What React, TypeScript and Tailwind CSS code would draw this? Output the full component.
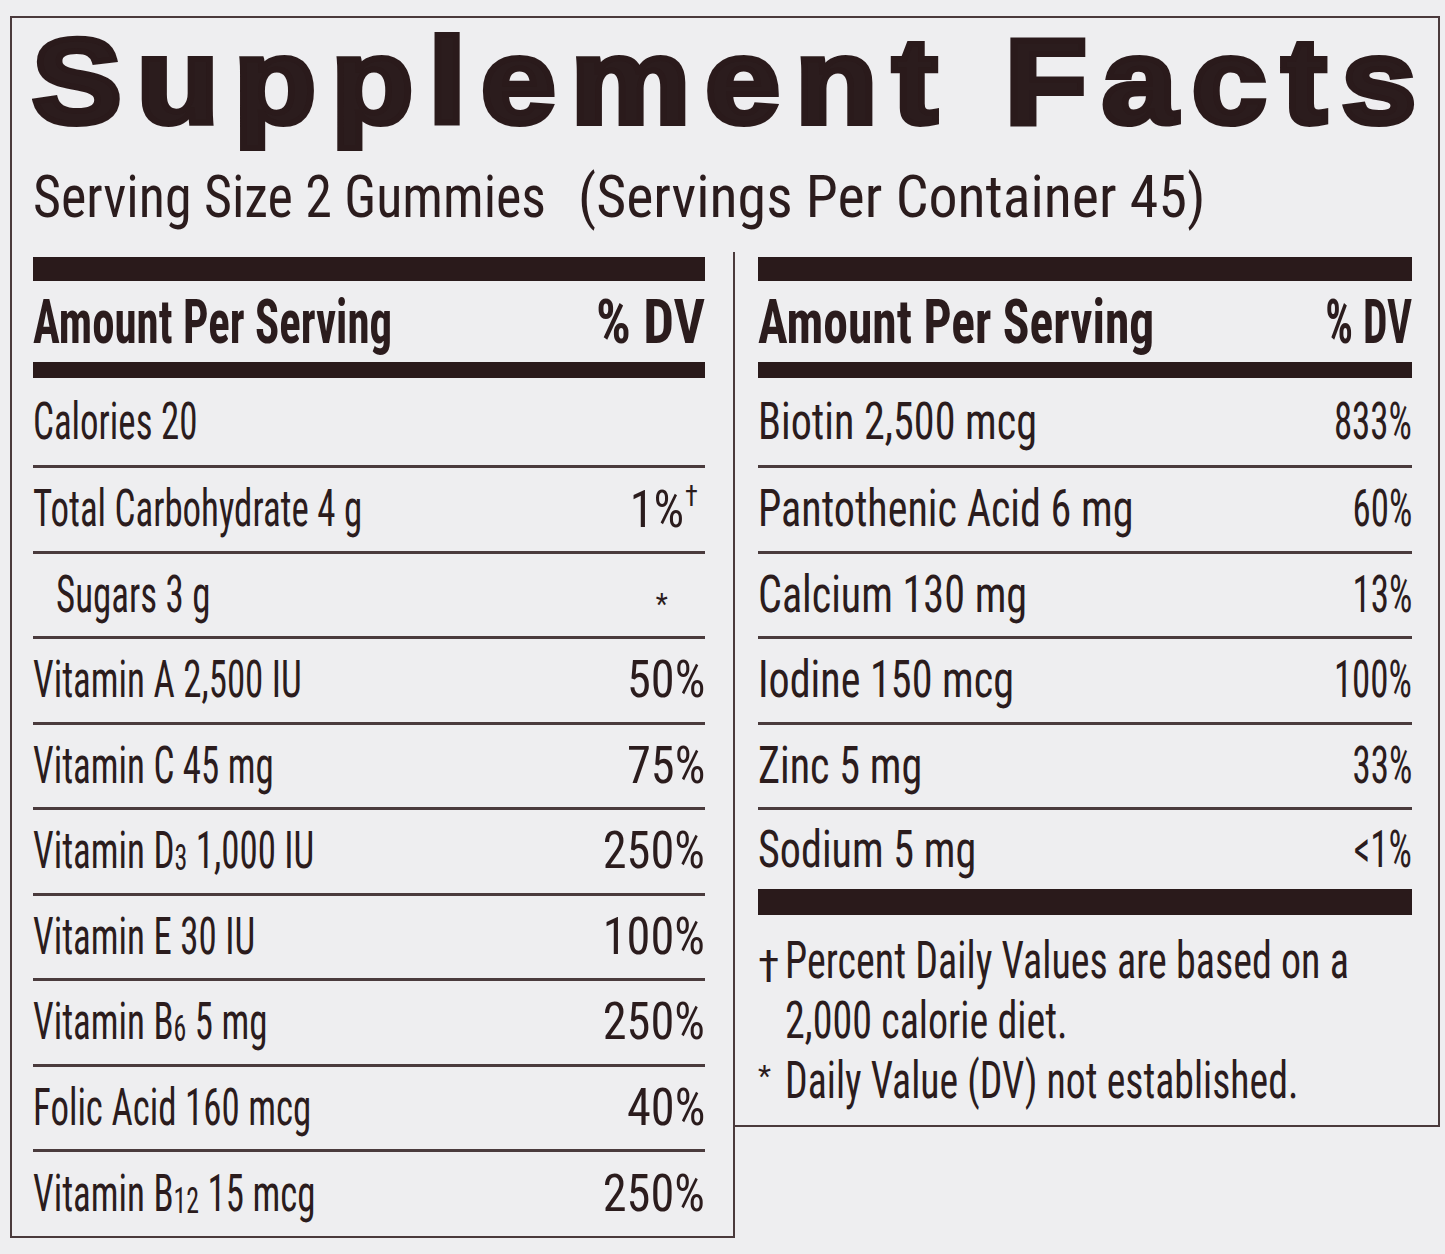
import React from 'react';

// Supplement Facts panel

type Row = {
  label: React.ReactNode;
  value?: React.ReactNode;
  indent?: boolean;
};

type Scales = {
  head: string;
  dv: string;
  label: string;
  value: string;
};

const Sub = ({ children }: { children: React.ReactNode }) => (
  <span className="text-[0.7em] align-[-0.06em]">{children}</span>
);

const LEFT_ROWS: Row[] = [
  { label: 'Calories 20' },
  {
    label: 'Total Carbohydrate 4 g',
    value: (
      <span className="inline-block mr-[8px]">
        1%<span className="text-[0.55em] align-[0.75em] ml-[1px]">†</span>
      </span>
    ),
  },
  {
    label: 'Sugars 3 g',
    indent: true,
    value: <span className="inline-block text-[30px] mr-[40px] translate-y-[2px]">*</span>,
  },
  { label: 'Vitamin A 2,500 IU', value: '50%' },
  { label: 'Vitamin C 45 mg', value: '75%' },
  { label: <>Vitamin D<Sub>3</Sub> 1,000 IU</>, value: '250%' },
  { label: 'Vitamin E 30 IU', value: '100%' },
  { label: <>Vitamin B<Sub>6</Sub> 5 mg</>, value: '250%' },
  { label: 'Folic Acid 160 mcg', value: '40%' },
  { label: <>Vitamin B<Sub>12</Sub> 15 mcg</>, value: '250%' },
];

const RIGHT_ROWS: Row[] = [
  { label: 'Biotin 2,500 mcg', value: '833%' },
  { label: 'Pantothenic Acid 6 mg', value: '60%' },
  { label: 'Calcium 130 mg', value: '13%' },
  { label: 'Iodine 150 mcg', value: '100%' },
  { label: 'Zinc 5 mg', value: '33%' },
  { label: 'Sodium 5 mg', value: '<1%' },
];

const LEFT_SCALES: Scales = {
  head: 'scale-x-[0.725]',
  dv: 'scale-x-[0.88]',
  label: 'scale-x-[0.71]',
  value: 'scale-x-[0.93]',
};

const RIGHT_SCALES: Scales = {
  head: 'scale-x-[0.8]',
  dv: 'scale-x-[0.7]',
  label: 'scale-x-[0.81]',
  value: 'scale-x-[0.71]',
};

function HeaderRow({ s }: { s: Scales }) {
  return (
    <>
      <div className="mt-[5px] h-[24px] bg-[#2a1a1b]" />
      <div className="h-[81px] flex items-center justify-between font-bold text-[62px] leading-none">
        <span className={`inline-block origin-left whitespace-nowrap ${s.head}`}>Amount Per Serving</span>
        <span className={`inline-block origin-right whitespace-nowrap ${s.dv}`}>% DV</span>
      </div>
      <div className="h-[16px] bg-[#2a1a1b]" />
    </>
  );
}

function NutrientRow({ row, first, height, s }: { row: Row; first: boolean; height: string; s: Scales }) {
  return (
    <div
      className={`flex items-center justify-between text-[52px] leading-none ${height} ${
        first ? '' : 'border-t-[3px] border-[#4a3b3d]'
      }`}
    >
      <span className={`inline-block origin-left whitespace-nowrap ${s.label} ${row.indent ? 'ml-[23px]' : ''}`}>
        {row.label}
      </span>
      {row.value && (
        <span className={`inline-block origin-right whitespace-nowrap ${s.value}`}>{row.value}</span>
      )}
    </div>
  );
}

export default function App() {
  return (
    <div className="w-[1445px] h-[1254px] bg-[#eeeef0] pt-[16px] text-[#2b1c1d] font-['Roboto_Condensed','Liberation_Sans',sans-serif] overflow-hidden">
      <div className="ml-[10px] w-[1430px]">
        {/* title block */}
        <div className="h-[236px] border-t-2 border-l-2 border-r-2 border-[#4a3a3c] pl-[21px] pt-[3px]">
          <h1 className="-ml-[1px] font-['Liberation_Sans','Arial',sans-serif] font-bold text-[120px] leading-none whitespace-nowrap">
            <span className="inline-block origin-left scale-x-[1.12] tracking-[13.5px] [-webkit-text-stroke:6px_#2a1a1b]">
              Supplement Facts
            </span>
          </h1>
          <div className="mt-[26px] text-[60px] leading-none whitespace-nowrap flex">
            <span className="inline-block origin-left scale-x-[0.9]">Serving Size 2 Gummies</span>
            <span className="inline-block origin-left scale-x-[0.965] -ml-[25px]">(Servings Per Container 45)</span>
          </div>
        </div>

        <div className="flex items-start">
          {/* left column */}
          <div className="w-[725px] border-l-2 border-r-2 border-b-2 border-[#4a3a3c] pl-[21px] pr-[28px]">
            <HeaderRow s={LEFT_SCALES} />
            {LEFT_ROWS.map((row, i) => (
              <NutrientRow
                key={i}
                row={row}
                s={LEFT_SCALES}
                first={i === 0}
                height={i === 0 ? 'h-[87px]' : i === LEFT_ROWS.length - 1 ? 'h-[87px]' : 'h-[85.5px]'}
              />
            ))}
          </div>

          {/* right column */}
          <div className="w-[705px] border-r-2 border-b-2 border-[#4a3a3c] pl-[23px] pr-[26px]">
            <HeaderRow s={RIGHT_SCALES} />
            {RIGHT_ROWS.map((row, i) => (
              <NutrientRow
                key={i}
                row={row}
                s={RIGHT_SCALES}
                first={i === 0}
                height={i === 0 ? 'h-[87px]' : i === RIGHT_ROWS.length - 1 ? 'h-[82px]' : 'h-[85.5px]'}
              />
            ))}
            <div className="h-[26px] bg-[#2a1a1b]" />
            <div className="h-[210px] pt-[16px] text-[52px] leading-[60px]">
              <div className="flex">
                <span className="w-[27px] shrink-0 text-[44px] translate-y-[6px] inline-block">†</span>
                <span className="inline-block origin-left scale-x-[0.77] whitespace-nowrap">
                  Percent Daily Values are based on a
                </span>
              </div>
              <div className="flex">
                <span className="w-[27px] shrink-0" />
                <span className="inline-block origin-left scale-x-[0.77] whitespace-nowrap">2,000 calorie diet.</span>
              </div>
              <div className="flex">
                <span className="w-[27px] shrink-0 text-[30px] leading-none pt-[10px]">*</span>
                <span className="inline-block origin-left scale-x-[0.765] whitespace-nowrap">
                  Daily Value (DV) not established.
                </span>
              </div>
            </div>
          </div>
        </div>
      </div>
    </div>
  );
}
